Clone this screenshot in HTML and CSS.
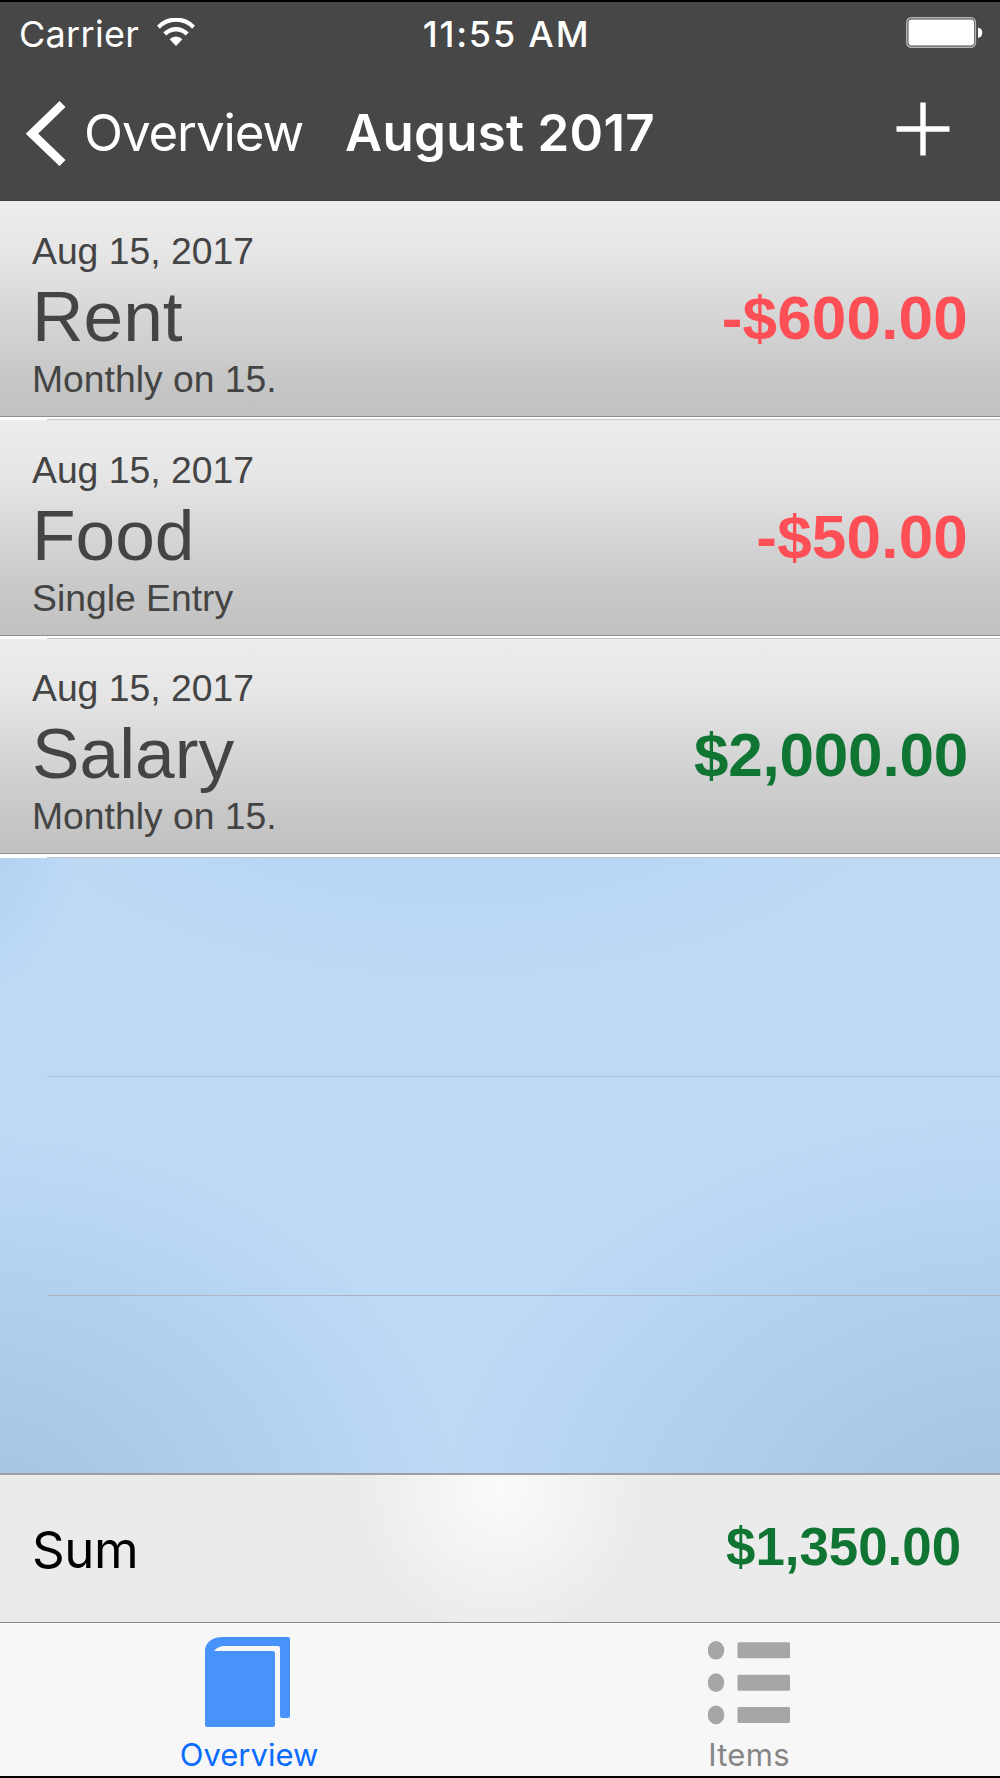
FILE: index.html
```html
<!DOCTYPE html>
<html lang="en">
<head>
<meta charset="UTF-8">
<meta name="viewport" content="width=device-width, initial-scale=1.0">
<title>August 2017</title>
<link rel="stylesheet" href="styles.css">
</head>
<body>

<div class="screen">
  <header class="header">
    <div class="status-bar">
      <div class="status-left">
        <span class="carrier">Carrier</span>
        <svg class="wifi" width="38" height="28" viewBox="0 0 38 28">
          <path d="M0 7.7A26 26 0 0 1 38 7.7L35.1 10.8A22 22 0 0 0 2.9 10.8Z" fill="#fff"/>
          <path d="M6.3 14.4A17.6 17.6 0 0 1 31.7 14.4L28.7 17.5A13.5 13.5 0 0 0 9.3 17.5Z" fill="#fff"/>
          <path d="M12.6 21.2A9 9 0 0 1 25.4 21.2L19 28Z" fill="#fff"/>
        </svg>
      </div>
      <span class="clock">11:55 AM</span>
      <div class="status-right">
        <svg class="battery" width="77" height="31" viewBox="0 0 77 31">
          <rect x="0.8" y="0.8" width="68.6" height="29.4" rx="4.5" fill="none" stroke="#b5b5b5" stroke-width="1.5"/>
          <rect x="2.5" y="2.5" width="65.5" height="26" rx="3" fill="#fff"/>
          <path d="M72 10.5Q76.3 11.5 76.3 15.7Q76.3 20 72 21Z" fill="#fff"/>
        </svg>
      </div>
    </div>
    <nav class="nav-bar">
      <a class="back">
        <svg width="42" height="66" viewBox="0 0 42 66">
          <path d="M36.5 4L6 33.7L36.5 63" fill="none" stroke="#fff" stroke-width="8.6"/>
        </svg>
        <span>Overview</span>
      </a>
      <h1 class="title">August 2017</h1>
      <a class="add">
        <svg width="54" height="54" viewBox="0 0 54 54">
          <path d="M0.5 27H53.5M27 0.5V53.5" stroke="#fff" stroke-width="5.4"/>
        </svg>
      </a>
    </nav>
  </header>

  <main class="entries">
    <div class="entry">
      <div class="cell">
        <div class="info">
          <div class="small-text">Aug 15, 2017</div>
          <div class="name">Rent</div>
          <div class="small-text interval">Monthly on 15.</div>
        </div>
        <div class="amount negative">-$600.00</div>
      </div>
      <div class="separator"></div>
    </div>
    <div class="entry">
      <div class="cell">
        <div class="info">
          <div class="small-text">Aug 15, 2017</div>
          <div class="name">Food</div>
          <div class="small-text interval">Single Entry</div>
        </div>
        <div class="amount negative">-$50.00</div>
      </div>
      <div class="separator"></div>
    </div>
    <div class="entry">
      <div class="cell">
        <div class="info">
          <div class="small-text">Aug 15, 2017</div>
          <div class="name">Salary</div>
          <div class="small-text interval">Monthly on 15.</div>
        </div>
        <div class="amount positive">$2,000.00</div>
      </div>
      <div class="separator"></div>
    </div>
    <div class="empty">
      <div class="empty-row"></div>
      <div class="empty-row"></div>
    </div>
  </main>

  <section class="sum">
    <span class="sum-label">Sum</span>
    <span class="sum-amount positive">$1,350.00</span>
  </section>

  <footer class="tab-bar">
    <a class="tab active">
      <svg width="91" height="91" viewBox="0 0 91 91">
        <path d="M0 12Q3 0 18 0H83Q85 0 85 2V79Q85 81 83 81H77Q75 81 75 79V11Q75 9 73 9H20Q13 9 9 14H68Q70 14 70 16V88Q70 90 68 90H2Q0 90 0 88Z" fill="#4793fb"/>
      </svg>
      <span>Overview</span>
    </a>
    <a class="tab">
      <svg width="85" height="91" viewBox="0 0 85 91">
        <g fill="#a6a6a6">
          <ellipse cx="8" cy="13.3" rx="8.3" ry="9.3"/>
          <ellipse cx="8" cy="45.6" rx="8.3" ry="9.3"/>
          <ellipse cx="8" cy="77.9" rx="8.3" ry="9.3"/>
          <rect x="29.5" y="5.3" width="52.5" height="16" rx="1.5"/>
          <rect x="29.5" y="37.7" width="52.5" height="16" rx="1.5"/>
          <rect x="29.5" y="69.9" width="52.5" height="16" rx="1.5"/>
        </g>
      </svg>
      <span>Items</span>
    </a>
  </footer>
</div>

</body>
</html>
```
FILE: styles.css
```css
* {
  box-sizing: border-box;
}

body {
  margin: 0;
  font-family: Inter, 'Liberation Sans', sans-serif;
  background-color: #f7f7f7;
}

.screen {
  display: flex;
  flex-direction: column;
  width: 1000px;
  height: 1778px;
  border-top: 2px solid #000;
  border-bottom: 2px solid #000;
  overflow: hidden;
  white-space: nowrap;
}

/* Header */
.header {
  height: 199px;
  background-color: #474747;
  border-bottom: 1px solid #3c3c3c;
  color: #fff;
}

.status-bar,
.nav-bar {
  display: grid;
  grid-template-columns: 1fr auto 1fr;
  align-items: center;
}

.status-bar {
  height: 64px;
  padding: 0 17px 0 19px;
  font-size: 36px;
}

.status-left {
  display: flex;
  align-items: center;
}

.wifi {
  margin-top: -4px;
}

.carrier {
  width: 138px;
  font-weight: 400;
  letter-spacing: 0.3px;
}

.clock {
  padding-left: 11px;
  font-weight: 500;
  letter-spacing: 1.8px;
}

.status-right {
  display: flex;
  justify-content: flex-end;
}

.battery {
  margin-top: -3px;
}

.nav-bar {
  height: 133px;
  padding: 0 26px;
  font-size: 51px;
}

.back {
  display: flex;
  align-items: center;
  font-weight: 400;
  letter-spacing: -1.1px;
}

.back span {
  margin-left: 16px;
}

.title {
  margin: 0;
  font-size: 51px;
  font-weight: 600;
  letter-spacing: 0.3px;
}

.add {
  display: flex;
  justify-content: flex-end;
  margin: 0 24px 7px 0;
}

/* Entries */
.entries {
  font-family: 'Liberation Sans', Arial, sans-serif;
  height: 1272px;
}

.entry {
  height: 219px;
  background-color: #fff;
}

.cell {
  display: flex;
  justify-content: space-between;
  align-items: center;
  height: 216px;
  padding: 0 32px;
  background: linear-gradient(#ededed 0%, #e6e6e6 25%, #d5d5d5 55%, #c8c8c8 80%, #c1c1c1 100%);
  border-bottom: 1px solid #8f8f8f;
}

.separator {
  height: 1px;
  margin: 2px 0 0 47px;
  background-color: #c4c4c8;
}

.entry:nth-child(3) .cell {
  height: 215px;
}

.entry:nth-child(3) .separator {
  margin-top: 3px;
}

.info {
  padding-top: 11px;
  color: #444;
}

.small-text {
  font-size: 37.3px;
  line-height: 45px;
}

.name {
  font-size: 71.3px;
  line-height: 84px;
}

.interval {
  line-height: 42px;
}

.amount {
  font-size: 62px;
  font-weight: bold;
  padding-top: 17px;
}

.negative {
  color: #ff4f56;
  letter-spacing: 0.2px;
}

.positive {
  color: #107433;
}

.amount.positive {
  letter-spacing: -0.2px;
}

.empty {
  height: 615px;
  background:
    radial-gradient(ellipse 490px 390px at -30px 670px, #a1c2e2, rgba(161, 194, 226, 0)),
    radial-gradient(ellipse 580px 410px at 1020px 670px, #a1c2e2, rgba(161, 194, 226, 0)),
    radial-gradient(ellipse 480px 250px at 455px -130px, #b2d2f0, rgba(178, 210, 240, 0)),
    radial-gradient(ellipse 120px 190px at -40px -50px, #acceee, rgba(172, 206, 238, 0)),
    #bdd9f6;
}

.empty-row {
  height: 219px;
  margin-left: 47px;
  border-bottom: 1px solid #b1bfcf;
}

.empty-row:last-child {
  border-bottom-color: #aab4c4;
}

/* Sum */
.sum {
  display: flex;
  justify-content: space-between;
  align-items: center;
  height: 150px;
  padding: 0 39px 0 32px;
  background: radial-gradient(circle 142px at 500px 15px, #fbfbfb, #ebebeb);
  border-top: 2px solid #9d9fa3;
  border-bottom: 1px solid #8a8a8a;
}

.sum-label {
  padding-top: 1px;
  font-size: 51px;
  letter-spacing: -0.4px;
  color: #000;
}

.sum-amount {
  padding-bottom: 4px;
  font-family: 'Liberation Sans', Arial, sans-serif;
  font-size: 52.8px;
  font-weight: bold;
}

/* Tabs */
.tab-bar {
  display: flex;
  flex: 1;
}

.tab {
  display: flex;
  flex: 1;
  flex-direction: column;
  align-items: center;
  padding-top: 14px;
  font-size: 31px;
  line-height: 38px;
  color: #868686;
  letter-spacing: 0.3px;
}

.tab span {
  margin: 8px 2px 0 0;
}

.active {
  color: #0a6cff;
  letter-spacing: 0;
}
```
